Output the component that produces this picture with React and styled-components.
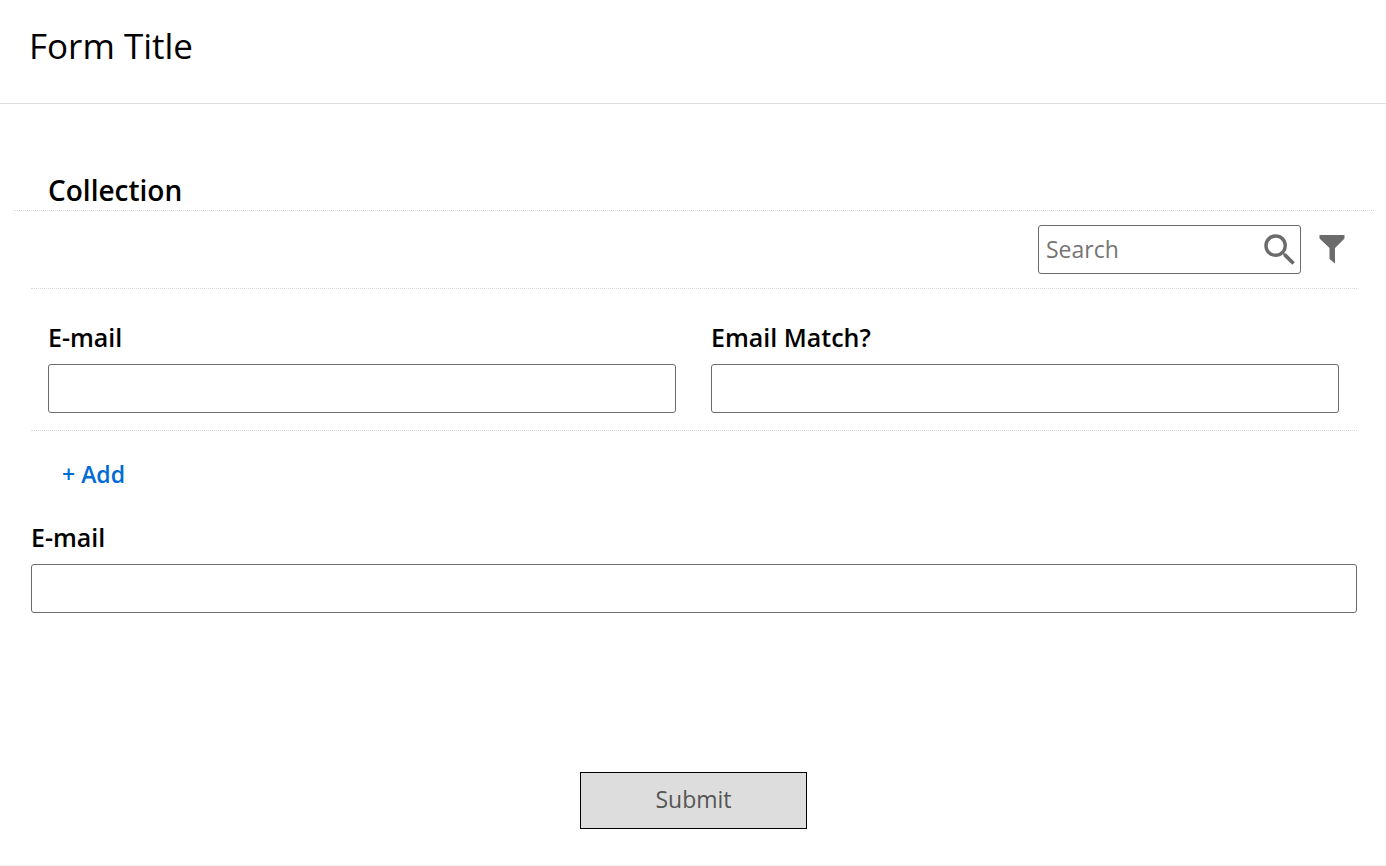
import React from 'react';
import styled, { createGlobalStyle } from 'styled-components';

const GlobalStyle = createGlobalStyle`
    * {
        box-sizing: border-box;
    }
    body {
        margin: 0;
        background-color: #fff;
        color: #000;
        font-family: 'Open Sans', 'Noto Sans', sans-serif;
        font-size: 23px;
    }
`;

const Header = styled.header`
    padding: 22px 29px 33px;
    border-bottom: 1px solid #ddd;
`;
const Title = styled.h1`
    margin: 0;
    font-size: 35px;
    font-weight: 400;
    line-height: 48px;
`;
const Form = styled.form`
    padding: 67px 12px 36px 13px;
    border-bottom: 1px solid #eee;
`;
const SectionTitle = styled.h2`
    margin: 0;
    padding: 0 35px 1px;
    border-bottom: 1px dotted #d8d8d8;
    font-size: 28px;
    font-weight: 600;
    line-height: 38px;
`;
const Content = styled.div`
    padding: 0 17px 0 18px;
`;
const Toolbar = styled.div`
    display: flex;
    align-items: center;
    justify-content: flex-end;
    gap: 18px;
    padding: 14px 12px 14px 0;
    border-bottom: 1px dotted #d8d8d8;
`;
const SearchBox = styled.div`
    display: flex;
    align-items: center;
    width: 263px;
    height: 49px;
    border: 1px solid #6b6b6b;
    border-radius: 3px;
`;
const SearchInput = styled.input`
    flex: 1;
    min-width: 0;
    height: 100%;
    padding: 0 7px 2px;
    border: 0;
    outline: 0;
    background: none;
    font: inherit;

    &::placeholder {
        color: #757575;
    }
`;
const IconButton = styled.button`
    display: flex;
    padding: 0;
    border: 0;
    background: none;
    color: #6b6b6b;
    cursor: pointer;
`;
const Row = styled.div`
    display: grid;
    grid-template-columns: 1fr 1fr;
    gap: 35px;
    padding: 31px 18px 17px 17px;
    border-bottom: 1px dotted #d8d8d8;
`;
const Field = styled.div`
    display: flex;
    flex-direction: column;
    gap: 10px;
`;
const Label = styled.label`
    font-size: 25px;
    font-weight: 600;
    line-height: 34px;
`;
const Input = styled.input`
    width: 100%;
    height: 49px;
    padding: 0 7px;
    border: 1px solid #6b6b6b;
    border-radius: 3px;
    background-color: #fff;
    font: inherit;
`;
const AddButton = styled.button`
    display: block;
    margin: 26px 0 29px 31px;
    padding: 0;
    border: 0;
    background: none;
    color: #006bd6;
    font: inherit;
    font-weight: 600;
    line-height: 34px;
    cursor: pointer;
`;
const SubmitButton = styled.button`
    display: block;
    width: 227px;
    height: 57px;
    margin: 159px auto 0;
    padding: 0 0 4px;
    border: 1px solid #000;
    border-radius: 0;
    background-color: #ddd;
    color: #555;
    font: inherit;
`;

function SearchIcon() {
    return (
        <svg width="42" height="42" viewBox="0 0 42 42" fill="currentColor" aria-hidden="true">
            <path transform="translate(1 0) scale(1.75)" d="M15.5 14h-.79l-.28-.27A6.471 6.471 0 0 0 16 9.5 6.5 6.5 0 1 0 9.5 16c1.61 0 3.09-.59 4.23-1.57l.27.28v.79l5 4.99L20.49 19l-4.99-5zm-6 0C7.01 14 5 11.99 5 9.5S7.01 5 9.5 5 14 7.01 14 9.5 11.99 14 9.5 14z" />
        </svg>
    );
}

function FilterIcon() {
    return (
        <svg width="26" height="30" viewBox="0 0 26 30" fill="currentColor" aria-hidden="true">
            <path d="M0.5 0h25v3.5L16 13v15.5L10.5 24V13L0.5 3.5z" />
        </svg>
    );
}

function TextField({ id, label }) {
    return (
        <Field>
            <Label htmlFor={id}>{label}</Label>
            <Input type="text" id={id} name={id} />
        </Field>
    );
}

function App() {
    return (
        <>
            <GlobalStyle />
            <Header>
                <Title>Form Title</Title>
            </Header>
            <Form onSubmit={(e) => e.preventDefault()}>
                <SectionTitle>Collection</SectionTitle>
                <Content>
                    <Toolbar>
                        <SearchBox>
                            <SearchInput type="text" placeholder="Search" aria-label="Search" />
                            <IconButton type="button" aria-label="Run search">
                                <SearchIcon />
                            </IconButton>
                        </SearchBox>
                        <IconButton type="button" aria-label="Filter">
                            <FilterIcon />
                        </IconButton>
                    </Toolbar>
                    <Row>
                        <TextField id="itemEmail" label="E-mail" />
                        <TextField id="emailMatch" label="Email Match?" />
                    </Row>
                    <AddButton type="button">+ Add</AddButton>
                    <TextField id="email" label="E-mail" />
                </Content>
                <SubmitButton type="submit">Submit</SubmitButton>
            </Form>
        </>
    );
}

export default App;
